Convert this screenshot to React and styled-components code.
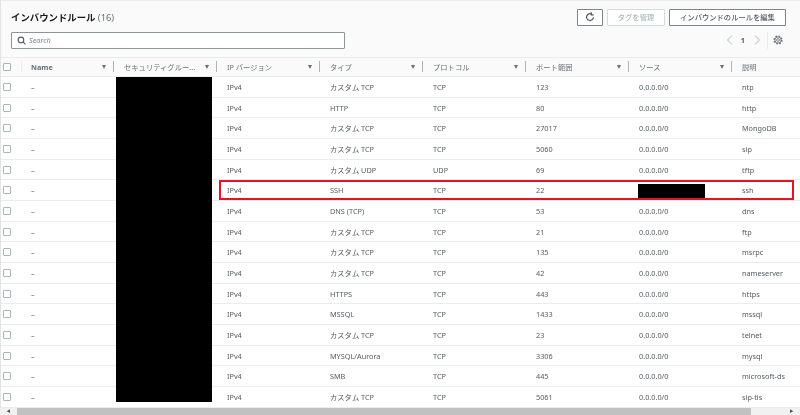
import React from "react";
import styled, { createGlobalStyle } from "styled-components";

const Global = createGlobalStyle`
  html, body { margin: 0; padding: 0; background: #fff; }
  body { font-family: "Noto Sans", "Noto Sans CJK JP", sans-serif; }
`;

const Page = styled.div`
  position: relative;
  width: 800px;
  height: 415px;
  overflow: hidden;
  display: flex;
  flex-direction: column;
  background: #fff;
  color: #16191f;
  filter: blur(0.35px);
`;
const Panel = styled.div`
  flex: 1;
  min-height: 0;
  display: flex;
  flex-direction: column;
  border-left: 1px solid #e4e4e4;
`;
const Head = styled.div`
  height: 56.5px;
  box-sizing: border-box;
  background: #fafafa;
  border-top: 1px solid #eaeded;
  padding: 7px 14px 0 10px;
  display: flex;
  flex-direction: column;
`;
const TitleRow = styled.div`
  display: flex;
  align-items: center;
  justify-content: space-between;
  height: 18px;
`;
const Title = styled.h2`
  margin: 0;
  font-size: 9.4px;
  font-weight: 700;
  color: #16191f;
  white-space: nowrap;
  span { font-weight: 400; color: #687078; }
`;
const Actions = styled.div`
  display: flex;
  gap: 4px;
`;
const Btn = styled.button`
  height: 17px;
  box-sizing: border-box;
  width: ${(p) => p.$w}px;
  padding: 0;
  display: flex;
  align-items: center;
  justify-content: center;
  background: #fff;
  border: 1px solid ${(p) => (p.disabled ? "#d5dbdb" : "#7d8389")};
  border-radius: 1px;
  color: ${(p) => (p.disabled ? "#aab7b8" : "#545b64")};
  font: 500 7.3px "Noto Sans", "Noto Sans CJK JP", sans-serif;
`;
const SearchRow = styled.div`
  display: flex;
  justify-content: space-between;
  align-items: center;
  margin-top: 5.5px;
`;
const Search = styled.div`
  width: 334px;
  height: 17px;
  box-sizing: border-box;
  border: 1px solid #8d9596;
  border-radius: 1px;
  background: #fff;
  display: flex;
  align-items: center;
  gap: 3px;
  padding-left: 5px;
  font-size: 7.3px;
  font-style: italic;
  color: #7d858c;
`;
const Pager = styled.div`
  display: flex;
  align-items: center;
  height: 15px;
  margin-right: 3px;
  font-size: 7.3px;
  font-weight: 700;
  color: #545b64;
`;
const PageNo = styled.span`
  margin: 0 9px 0 8px;
`;
const PagerDivider = styled.span`
  width: 1px;
  height: 17px;
  background: #eaeded;
  margin: 0 5px 0 6px;
`;
const Table = styled.div`
  display: flex;
  flex-direction: column;
`;
const Row = styled.div`
  display: grid;
  grid-template-columns: 20px 93px repeat(6, 103px) 1fr;
  height: 20.67px;
  box-sizing: border-box;
  align-items: center;
  border-bottom: 1px solid #eaeded;
  font-size: 7.3px;
  color: #545b64;
  white-space: nowrap;
`;
const HeadRow = styled(Row)`
  background: #fafafa;
  border-top: 1px solid #eaeded;
  font-weight: 400;
  color: #687078;
`;
const Check = styled.span`
  width: 8px;
  height: 8px;
  box-sizing: border-box;
  border: 1px solid #aab7b8;
  border-radius: 1px;
  background: #fff;
  margin-left: 2px;
`;
const Cell = styled.div`
  padding-left: 10px;
  min-width: 0;
`;
const HeadCell = styled.div`
  height: 11px;
  display: flex;
  align-items: center;
  justify-content: space-between;
  padding: 0 7px 0 ${(p) => (p.$first ? 9 : 10)}px;
  border-right: 1px solid #aab7b8;
  border-left: ${(p) => (p.$first ? "1px solid #eaeded" : "none")};
  font-weight: ${(p) => (p.$latin ? 700 : 400)};
`;
const Caret = styled.span`
  width: 0;
  height: 0;
  border-left: 2.5px solid transparent;
  border-right: 2.5px solid transparent;
  border-top: 4px solid #687078;
`;
const Redact = styled.div`
  position: absolute;
  background: #000;
  left: ${(p) => p.$x}px;
  top: ${(p) => p.$y}px;
  width: ${(p) => p.$w}px;
  height: ${(p) => p.$h}px;
`;
const RedBox = styled.div`
  position: absolute;
  left: 219px;
  top: 180px;
  width: 575px;
  height: 20px;
  box-sizing: border-box;
  border: 2px solid #e3141f;
`;
const ScrollBar = styled.div`
  height: 7px;
  flex-shrink: 0;
  background: #f1f1f1;
  display: flex;
  align-items: center;
`;
const ScrollEnd = styled.span`
  width: 17px;
  display: flex;
  justify-content: center;
  color: #505050;
  font-size: 4px;
  line-height: 7px;
  margin-left: ${(p) => (p.$end ? "auto" : "0")};
`;
const Thumb = styled.div`
  width: 734px;
  height: 7px;
  background: #c1c1c1;
`;

const rows = [
  ["カスタム TCP", "TCP", "123", "ntp"],
  ["HTTP", "TCP", "80", "http"],
  ["カスタム TCP", "TCP", "27017", "MongoDB"],
  ["カスタム TCP", "TCP", "5060", "sip"],
  ["カスタム UDP", "UDP", "69", "tftp"],
  ["SSH", "TCP", "22", "ssh"],
  ["DNS (TCP)", "TCP", "53", "dns"],
  ["カスタム TCP", "TCP", "21", "ftp"],
  ["カスタム TCP", "TCP", "135", "msrpc"],
  ["カスタム TCP", "TCP", "42", "nameserver"],
  ["HTTPS", "TCP", "443", "https"],
  ["MSSQL", "TCP", "1433", "mssql"],
  ["カスタム TCP", "TCP", "23", "telnet"],
  ["MYSQL/Aurora", "TCP", "3306", "mysql"],
  ["SMB", "TCP", "445", "microsoft-ds"],
  ["カスタム TCP", "TCP", "5061", "sip-tls"],
];
const heads = ["Name", "セキュリティグルー...", "IP バージョン", "タイプ", "プロトコル", "ポート範囲", "ソース"];

export default function App() {
  return (
    <Page>
      <Global />
      <Panel>
        <Head>
          <TitleRow>
            <Title>インバウンドルール <span>(16)</span></Title>
            <Actions>
              <Btn $w={26} aria-label="更新">
                <svg width="10" height="10" viewBox="0 0 16 16" fill="none" stroke="#545b64" strokeWidth="2">
                  <path d="M13.5 8.5A5.5 5.5 0 1 1 10.5 3.2" />
                  <path d="M10 0.5v4h4" />
                </svg>
              </Btn>
              <Btn $w={58} disabled>タグを管理</Btn>
              <Btn $w={117}>インバウンドのルールを編集</Btn>
            </Actions>
          </TitleRow>
          <SearchRow>
            <Search>
              <svg width="9" height="9" viewBox="0 0 16 16" fill="none" stroke="#545b64" strokeWidth="2">
                <circle cx="7" cy="7" r="5" />
                <path d="M11 11l4 4" />
              </svg>
              Search
            </Search>
            <Pager>
              <svg width="7" height="10" viewBox="0 0 7 10" fill="none" stroke="#aab7b8" strokeWidth="1">
                <path d="M6 .5L1.5 5 6 9.5" />
              </svg>
              <PageNo>1</PageNo>
              <svg width="7" height="10" viewBox="0 0 7 10" fill="none" stroke="#aab7b8" strokeWidth="1">
                <path d="M1 .5L5.5 5 1 9.5" />
              </svg>
              <PagerDivider />
              <svg width="10" height="10" viewBox="0 0 16 16" fill="none" stroke="#687078">
                <circle cx="8" cy="8" r="6" strokeWidth="2.6" strokeDasharray="2.6 2.1" />
                <circle cx="8" cy="8" r="5" strokeWidth="1.2" />
                <circle cx="8" cy="8" r="2.2" strokeWidth="1.4" />
              </svg>
            </Pager>
          </SearchRow>
        </Head>
        <Table>
          <HeadRow>
            <Check />
            {heads.map((h, i) => (
              <HeadCell key={h} $first={i === 0} $latin={i === 0}>
                <span>{h}</span>
                <Caret />
              </HeadCell>
            ))}
            <Cell>説明</Cell>
          </HeadRow>
          {rows.map((r, i) => (
            <Row key={i}>
              <Check />
              <Cell>–</Cell>
              <Cell />
              <Cell>IPv4</Cell>
              <Cell>{r[0]}</Cell>
              <Cell>{r[1]}</Cell>
              <Cell>{r[2]}</Cell>
              <Cell>0.0.0.0/0</Cell>
              <Cell>{r[3]}</Cell>
            </Row>
          ))}
        </Table>
      </Panel>
      <ScrollBar>
        <ScrollEnd>◀</ScrollEnd>
        <Thumb />
        <ScrollEnd $end>▶</ScrollEnd>
      </ScrollBar>
      <Redact $x={116} $y={77} $w={96} $h={325} />
      <Redact $x={638} $y={184} $w={67} $h={14} />
      <RedBox />
    </Page>
  );
}
